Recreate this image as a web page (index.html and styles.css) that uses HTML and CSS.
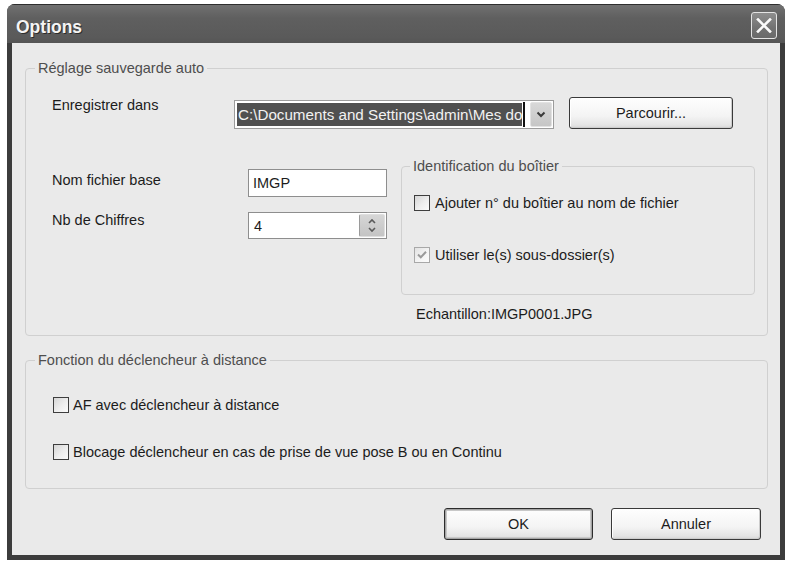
FILE: index.html
```html
<!DOCTYPE html>
<html lang="fr">
<head>
<meta charset="utf-8">
<title>Options</title>
<link rel="stylesheet" href="styles.css">
</head>
<body>
<div class="window">
  <div class="titlebar">
    <span class="title">Options</span>
    <button class="close" type="button" aria-label="Fermer">
      <svg width="16" height="15" viewBox="0 0 16 15"><path d="M2 1.5 L14 13.5 M14 1.5 L2 13.5" stroke="#fafafa" stroke-width="2.6" stroke-linecap="square" fill="none"/></svg>
    </button>
  </div>
  <div class="client">
    <fieldset class="group group-auto">
      <legend>Réglage sauvegarde auto</legend>
      <div class="row-path">
        <span class="label label-path">Enregistrer dans</span>
        <div class="combo">
          <div class="combo-field"><span class="sel">C:\Documents and Settings\admin\Mes do</span><span class="caret"></span></div>
          <span class="combo-btn">
            <svg width="10" height="7" viewBox="0 0 10 7"><path d="M1.5 1.5 L5 5 L8.5 1.5" stroke="#3a3a3a" stroke-width="2" fill="none"/></svg>
          </span>
        </div>
        <button class="btn btn-browse" type="button">Parcourir...</button>
      </div>
      <div class="row-detail">
        <div class="fields">
          <div class="field field-name">
            <span class="label">Nom fichier base</span>
            <div class="textbox">IMGP</div>
          </div>
          <div class="field field-digits">
            <span class="label">Nb de Chiffres</span>
            <div class="spin">
              <span class="spin-value">4</span>
              <span class="spin-btns">
                <svg width="10" height="17" viewBox="0 0 10 17"><path d="M2 6 L5 3 L8 6 M2 11 L5 14 L8 11" stroke="#5a5a5a" stroke-width="1.6" fill="none"/></svg>
              </span>
            </div>
          </div>
        </div>
        <div class="ident">
          <fieldset class="group group-ident">
            <legend>Identification du boîtier</legend>
            <div class="check"><span class="box"></span><span>Ajouter n° du boîtier au nom de fichier</span></div>
            <div class="check check-second"><span class="box box-checked"><svg width="14" height="14" viewBox="0 0 14 14"><path d="M3 6.5 L5.8 9.3 L11 3.8" stroke="#9a9a9a" stroke-width="2" fill="none"/></svg></span><span>Utiliser le(s) sous-dossier(s)</span></div>
          </fieldset>
          <div class="sample">Echantillon:IMGP0001.JPG</div>
        </div>
      </div>
    </fieldset>
    <fieldset class="group group-remote">
      <legend>Fonction du déclencheur à distance</legend>
      <div class="check"><span class="box"></span><span>AF avec déclencheur à distance</span></div>
      <div class="check check-second"><span class="box"></span><span>Blocage déclencheur en cas de prise de vue pose B ou en Continu</span></div>
    </fieldset>
    <div class="actions">
      <button class="btn btn-ok" type="button">OK</button>
      <button class="btn btn-cancel" type="button">Annuler</button>
    </div>
  </div>
</div>
</body>
</html>
```

FILE: styles.css
```css
html, body {
  margin: 0;
  padding: 0;
  background: #ffffff;
}

body {
  font-family: "Liberation Sans", Arial, sans-serif;
  font-size: 14.5px;
  color: #1c1c1c;
}

.window {
  margin: 4px 0 0 7px;
  width: 778px;
  height: 556px;
  background: #3c3c3c;
  border-radius: 8px 8px 0 0;
  display: flex;
  flex-direction: column;
  overflow: hidden;
}

.titlebar {
  flex: none;
  height: 39px;
  box-sizing: border-box;
  border-top: 1px solid #2e2e2e;
  background: linear-gradient(#707070, #5f5f5f 35%, #5a5a5a 85%, #555555);
  display: flex;
  align-items: flex-start;
  justify-content: space-between;
  padding: 0 8px 0 9px;
}

.title {
  margin-top: 12px;
  font-weight: bold;
  font-size: 17.5px;
  line-height: 20px;
  color: #f4f4f4;
  text-shadow: 1px 1px 0 #2c2c2c;
}

.close {
  margin-top: 7px;
  width: 26px;
  height: 27px;
  box-sizing: border-box;
  padding: 0;
  border: 1px solid #e4e4e4;
  border-radius: 3px;
  background: linear-gradient(#8e8e8e, #727272 60%, #6a6a6a);
  display: flex;
  align-items: center;
  justify-content: center;
}

.client {
  flex: none;
  height: 512px;
  box-sizing: border-box;
  margin: 0 5px 5px;
  background: #eaeaea;
  padding: 17px 12px 15px 13px;
  display: flex;
  flex-direction: column;
}

.group {
  margin: 0;
  padding: 0;
  min-width: 0;
  border: 1px solid #d0d0d0;
  border-radius: 4px;
}

.group legend {
  margin-left: 9px;
  padding: 0 3px;
  line-height: 17px;
  color: #4e4e4e;
}

.label {
  line-height: 17px;
  flex: none;
}

/* group 1 */
.group-auto {
  padding: 20px 0 12px;
}

.row-path {
  display: flex;
  align-items: flex-start;
  height: 32px;
  padding-left: 26px;
}

.label-path {
  width: 182px;
}

.combo {
  margin-top: 3px;
  width: 320px;
  height: 29px;
  box-sizing: border-box;
  border: 1px solid #9c9c9c;
  background: #ffffff;
  padding: 1px 1px 1px 2px;
  display: flex;
  align-items: center;
}

.combo-field {
  flex: 1;
  display: flex;
  align-items: center;
  overflow: hidden;
}

.sel {
  background: #505050;
  color: #f2f2f2;
  font-size: 15.2px;
  line-height: 23px;
  padding-left: 1px;
  white-space: nowrap;
}

.caret {
  width: 2px;
  height: 25px;
  background: #111111;
  margin-left: 1px;
}

.combo-btn {
  flex: none;
  width: 22px;
  height: 25px;
  box-sizing: border-box;
  border: 1px solid #e2e2e2;
  border-radius: 2px;
  background: linear-gradient(#d8d8d8, #c6c6c6);
  display: flex;
  align-items: center;
  justify-content: center;
}

.btn {
  font: inherit;
  color: #1c1c1c;
  padding: 0;
  height: 32px;
  box-sizing: border-box;
  border: 1px solid #3a3a3a;
  border-radius: 3px;
  background: linear-gradient(#fefefe, #f4f4f4 60%, #e4e4e4 90%, #d6d6d6);
  box-shadow: inset 1px 1px 0 #ffffff, inset -1px -1px 0 #cdcdcd;
}

.btn-browse {
  margin-left: 15px;
  width: 164px;
}

.row-detail {
  margin-top: 29px;
  display: flex;
  align-items: flex-start;
}

.fields {
  width: 349px;
  padding: 11px 0 0 26px;
}

.field {
  display: flex;
  align-items: flex-start;
}

.field .label {
  width: 196px;
}

.field-name .label {
  margin-top: 3px;
}

.field-digits {
  margin-top: 15px;
}

.textbox {
  width: 139px;
  height: 28px;
  box-sizing: border-box;
  border: 1px solid #8e8e8e;
  background: #ffffff;
  padding: 0 4px;
  line-height: 26px;
}

.spin {
  width: 139px;
  height: 27px;
  box-sizing: border-box;
  border: 1px solid #8e8e8e;
  background: #ffffff;
  padding: 1px;
  display: flex;
}

.spin-value {
  flex: 1;
  padding-left: 4px;
  line-height: 25px;
}

.spin-btns {
  flex: none;
  width: 26px;
  box-sizing: border-box;
  border: 1px solid #dedede;
  border-left-color: #9a9a9a;
  border-radius: 2px;
  background: linear-gradient(#d6d6d6, #c4c4c4);
  display: flex;
  align-items: center;
  justify-content: center;
}

.ident {
  width: 354px;
}

.group-ident {
  padding: 20px 0 31px;
}

.group-ident legend {
  margin-left: 8px;
}

.check {
  display: flex;
  align-items: center;
  height: 16px;
  line-height: 17px;
  white-space: nowrap;
}

.group-ident .check {
  margin-left: 12px;
}

.group-ident .check-second {
  margin-top: 36px;
}

.box {
  flex: none;
  width: 16px;
  height: 16px;
  box-sizing: border-box;
  border: 1px solid #3e3e3e;
  background: linear-gradient(135deg, #d6d6d6, #eeeeee 55%, #fbfbfb);
  margin-right: 5px;
  display: flex;
  align-items: center;
  justify-content: center;
}

.box-checked {
  border-color: #a8a8a8;
  background: linear-gradient(135deg, #e2e2e2, #f4f4f4 55%, #fcfcfc);
}

.sample {
  margin: 11px 0 0 15px;
  line-height: 17px;
}

/* group 2 */
.group-remote {
  margin-top: 16px;
  padding: 28px 0 28px;
}

.group-remote .check {
  margin-left: 27px;
}

.group-remote .check-second {
  margin-top: 31px;
}

.group-remote .box {
  margin-right: 4px;
}

.actions {
  margin-top: 19px;
  padding-right: 7px;
  display: flex;
  justify-content: flex-end;
  gap: 18px;
}

.btn-ok {
  width: 149px;
  border-color: #2c2c2c;
  box-shadow: inset 0 0 0 1px #a4a4a4, inset 0 0 0 2px #c8c8c8;
}

.btn-cancel {
  width: 150px;
}
```
